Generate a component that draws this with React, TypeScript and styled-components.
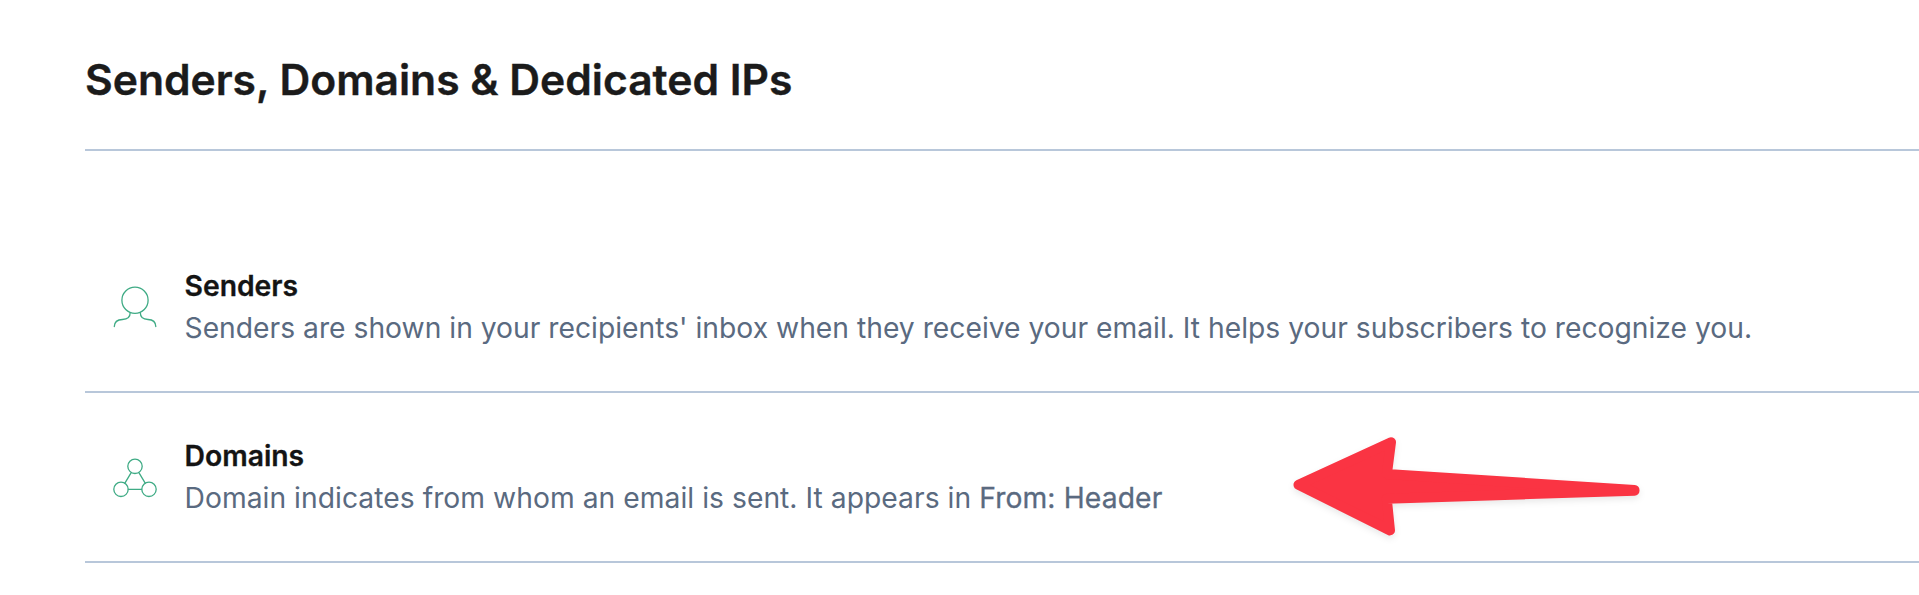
import React from "react";
import styled, { createGlobalStyle } from "styled-components";

const Global = createGlobalStyle`
  body { margin: 0; background: #fff; font-family: Inter, "Liberation Sans", sans-serif; overflow: hidden; }
`;
const Page = styled.main`
  padding-left: 85px;
  height: 595px;
  box-sizing: border-box;
`;
const Header = styled.header`
  height: 151px;
  box-sizing: border-box;
  border-bottom: 2px solid #b8c7da;
  padding-top: 53px;
  margin-bottom: 72px;
`;
const Title = styled.h1`
  margin: 0;
  font-size: 42.6px;
  line-height: 54px;
  font-weight: 600;
  -webkit-text-stroke: 0.4px currentColor;
  color: #1b1b1b;
  white-space: nowrap;
`;
const Row = styled.section`
  position: relative;
  height: 170px;
  box-sizing: border-box;
  border-bottom: 2px solid #b8c7da;
  display: flex;
  align-items: center;
  padding-left: 28px;
  gap: 27.5px;
`;
const Name = styled.h2`
  margin: 0;
  font-size: 28.3px;
  line-height: 42px;
  font-weight: 600;
  -webkit-text-stroke: 0.3px currentColor;
  color: #141414;
`;
const Description = styled.p<{ $tracking?: number }>`
  margin: 0;
  font-size: 28.25px;
  line-height: 43px;
  letter-spacing: ${({ $tracking = 0 }) => $tracking}px;
  color: #5a6a80;
  white-space: nowrap;
`;
const Strong = styled.span`
  letter-spacing: 0.12px;
  -webkit-text-stroke: 0.3px currentColor;
`;
const Icon = styled.svg`
  width: 44px;
  height: 44px;
  flex: none;
  fill: none;
  stroke: #3fab85;
  stroke-width: 1.3;
  stroke-linecap: round;
`;
const Pointer = styled.svg`
  position: absolute;
  left: 1195px;
  top: 33px;
  width: 380px;
  height: 120px;
  fill: #fa3443;
  stroke: #fa3443;
  stroke-width: 10;
  stroke-linejoin: round;
  filter: drop-shadow(0 3px 3px rgba(0, 0, 0, 0.09));
`;

export default function App() {
  return (
    <Page>
      <Global />
      <Header><Title>Senders, Domains &amp; Dedicated IPs</Title></Header>
      <Row>
        <Icon viewBox="113 285 44 44">
          <circle cx="135" cy="300.3" r="13.1" />
          <path d="M130.2 312.6C130.2 317.5 127 319.5 122.5 319.5C118 319.7 114.4 322 114.3 326.5M140.3 312.6C140.3 317.5 143.5 319.5 148 319.5C152.5 319.7 155.7 322 155.8 326.5" />
        </Icon>
        <div><Name>Senders</Name><Description>Senders are shown in your recipients' inbox when they receive your email. It helps your subscribers to recognize you.</Description></div>
      </Row>
      <Row>
        <Icon viewBox="113 455 44 44">
          <circle cx="135" cy="466.3" r="7.2" />
          <circle cx="121" cy="489.3" r="7.2" />
          <circle cx="149" cy="489.3" r="7.2" />
          <path d="M131.2 472.6L124.9 483.1M138.9 472.6L145.2 483.1M128.3 489.3H141.6" />
        </Icon>
        <div><Name>Domains</Name><Description $tracking={0.03}>Domain indicates from whom an email is sent. It appears in <Strong>From: Header</Strong></Description></div>
        <Pointer viewBox="1280 426 380 120">
          <path d="M1298.5 484.8L1391 442.2L1386.9 474L1634.5 490L1634.5 490.7L1386.8 498.7L1390 530.4Z" />
        </Pointer>
      </Row>
    </Page>
  );
}
